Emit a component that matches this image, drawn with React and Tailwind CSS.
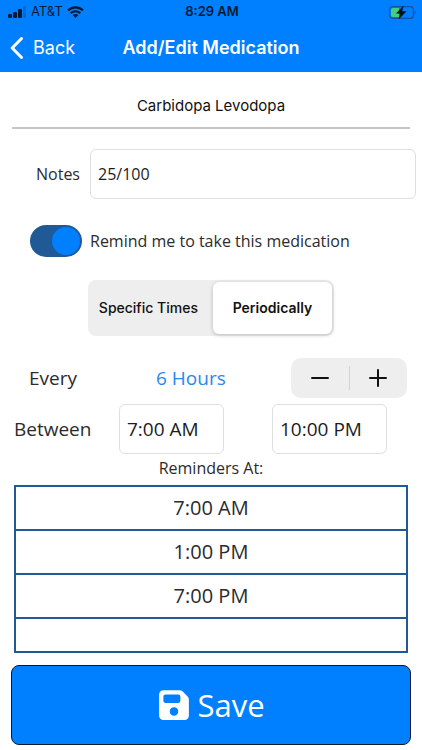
import { useState } from "react";
import { FaFloppyDisk } from "react-icons/fa6";

const field =
  "h-[50px] rounded-md border border-[#dfdfe1] bg-white px-[7px] text-[#1c1c1e] outline-none";

function SignalIcon() {
  return (
    <svg width="19" height="12" viewBox="0 0 19 12" aria-hidden="true">
      <rect x="0" y="8" width="4" height="4" rx="1" fill="#001a33" />
      <rect x="5" y="6" width="4" height="6" rx="1" fill="#001a33" />
      <rect x="10" y="3" width="4" height="9" rx="1" fill="#001a33" />
      <rect x="15" y="0" width="3" height="12" rx="1" fill="#0068cf" />
    </svg>
  );
}

function WifiIcon() {
  return (
    <svg width="17" height="12" viewBox="0 0 17 12" fill="none" aria-hidden="true">
      <path d="M1 4.4C5.2 0.3 11.8 0.3 16 4.4" stroke="#001a33" strokeWidth="2.2" />
      <path d="M3.7 7.2C6.4 4.6 10.6 4.6 13.3 7.2" stroke="#001a33" strokeWidth="2.1" />
      <path d="M8.5 12L5.7 9.1C7.2 7.6 9.8 7.6 11.3 9.1Z" fill="#001a33" />
    </svg>
  );
}

function BatteryIcon() {
  return (
    <svg width="27" height="13" viewBox="0 0 27 13" fill="none" aria-hidden="true">
      <rect x="0.6" y="0.6" width="23.8" height="11.8" rx="3.4" stroke="#0a55a8" strokeWidth="1.2" />
      <path d="M4 2h6v9H4a2 2 0 0 1-2-2V4a2 2 0 0 1 2-2Z" fill="#3fcf7f" />
      <path d="M25.6 4.3c1.3.6 1.3 3.8 0 4.4Z" fill="#0a55a8" />
      <path d="M14.2 0.2L7.6 7.3H11.4L10 12.8L16.8 5.6H12.8Z" fill="#001018" stroke="#001018" strokeWidth="0.6" />
    </svg>
  );
}

function Header() {
  return (
    <header className="bg-[#007fff] font-['Inter',sans-serif]">
      <div className="grid h-6 grid-cols-3 items-center pr-1.5 pl-2 text-[13px] text-[#001a33]">
        <div className="flex items-center gap-1">
          <SignalIcon />
          <span>AT&amp;T</span>
          <WifiIcon />
        </div>
        <span className="text-center font-semibold">8:29 AM</span>
        <div className="flex justify-end">
          <BatteryIcon />
        </div>
      </div>
      <nav className="grid h-12 grid-cols-[1fr_auto_1fr] items-center px-2.5 text-lg text-white">
        <a href="#back" className="flex items-center gap-2.5">
          <svg width="13" height="22" viewBox="0 0 13 22" fill="none" aria-hidden="true">
            <path d="M11.5 1.5L2.2 11L11.5 20.5" stroke="white" strokeWidth="3" strokeLinecap="round" strokeLinejoin="round" />
          </svg>
          Back
        </a>
        <h1 className="font-semibold">Add/Edit Medication</h1>
      </nav>
    </header>
  );
}

function ModeOption({ value, mode, onSelect, children }) {
  return (
    <label className="flex flex-auto cursor-pointer items-center justify-center rounded-md pr-3.5 pl-2 font-medium has-checked:bg-white has-checked:px-[19px] has-checked:font-semibold has-checked:shadow-[0_1px_4px_rgba(0,0,0,0.22)]">
      <input
        type="radio"
        name="mode"
        className="sr-only"
        checked={mode === value}
        onChange={() => onSelect(value)}
      />
      {children}
    </label>
  );
}

export default function App() {
  const [mode, setMode] = useState("periodic");
  const [hours, setHours] = useState(6);
  const times = ["7:00 AM", "1:00 PM", "7:00 PM"];

  return (
    <div className="bg-white font-['Open_Sans',sans-serif] text-[#2b2b2d]">
      <Header />
      <main className="pt-4">
        <div className="px-3">
          <input
            aria-label="Medication name"
            defaultValue="Carbidopa Levodopa"
            className="h-[41px] w-full border-b-2 border-[#c6c6c6] pb-1 text-center font-['Inter',sans-serif] text-[15px] text-[#111111] outline-none"
          />
        </div>

        <div className="mt-5 flex items-center pr-1.5 pl-9">
          <label htmlFor="notes" className="w-[54px]">Notes</label>
          <input id="notes" defaultValue="25/100" className={`${field} min-w-0 flex-1`} />
        </div>

        <div className="mt-[26px] flex items-center gap-2 pl-[30px]">
          <input
            id="remind"
            type="checkbox"
            defaultChecked
            className="flex h-8 w-[52px] appearance-none items-center rounded-full bg-[#9a9aa0] px-0.5 before:size-7 before:rounded-full before:bg-white checked:justify-end checked:bg-[#1f5a97] checked:before:bg-[#007fff]"
          />
          <label htmlFor="remind">Remind me to take this medication</label>
        </div>

        <fieldset
          aria-label="Reminder type"
          className="mx-auto mt-[23px] flex h-14 w-[246px] rounded-lg bg-[#eeeeef] p-0.5 font-['Inter',sans-serif] text-sm text-[#111111]"
        >
          <ModeOption value="specific" mode={mode} onSelect={setMode}>Specific Times</ModeOption>
          <ModeOption value="periodic" mode={mode} onSelect={setMode}>Periodically</ModeOption>
        </fieldset>

        <div className="mt-[22px] grid h-10 grid-cols-[127px_1fr_116px] items-center pr-[15px] pl-[29px] text-[19px]">
          <span>Every</span>
          <output className="text-[#2b86f0]">{hours} Hours</output>
          <div className="flex h-10 items-center rounded-[10px] bg-[#eeeeef]">
            <button
              type="button"
              aria-label="Fewer hours"
              className="flex h-full flex-1 items-center justify-center"
              onClick={() => setHours(Math.max(1, hours - 1))}
            >
              <svg width="18" height="18" viewBox="0 0 18 18" aria-hidden="true">
                <path d="M1 9H17" stroke="#111111" strokeWidth="2" strokeLinecap="round" />
              </svg>
            </button>
            <span className="h-6 w-px bg-[#d4d4d7]" />
            <button
              type="button"
              aria-label="More hours"
              className="flex h-full flex-1 items-center justify-center"
              onClick={() => setHours(hours + 1)}
            >
              <svg width="18" height="18" viewBox="0 0 18 18" aria-hidden="true">
                <path d="M1 9H17M9 1V17" stroke="#111111" strokeWidth="2" strokeLinecap="round" />
              </svg>
            </button>
          </div>
        </div>

        <div className="mt-1.5 grid grid-cols-[105px_1fr_115px] items-center pr-[35px] pl-3.5 text-[19px]">
          <span>Between</span>
          <input aria-label="Start time" defaultValue="7:00 AM" className={`${field} w-[105px]`} />
          <input aria-label="End time" defaultValue="10:00 PM" className={`${field} w-[115px]`} />
        </div>

        <h2 className="mt-0.5 text-center text-base">Reminders At:</h2>

        <div className="mt-[5px] px-3.5">
          <table aria-label="Reminder times" className="w-full border-collapse text-center text-xl">
            <tbody>
              {times.map((time) => (
                <tr key={time}>
                  <td className="h-11 border-2 border-[#1f5a97]">{time}</td>
                </tr>
              ))}
              <tr>
                <td className="h-[34px] border-2 border-[#1f5a97]" />
              </tr>
            </tbody>
          </table>
        </div>

        <div className="px-[11px] pt-3 pb-1.5">
          <button
            type="button"
            className="flex h-20 w-full items-center justify-center gap-1.5 rounded-lg border border-[#061a33] bg-[#007fff] text-[31px] text-white"
          >
            <FaFloppyDisk size={34} aria-hidden="true" />
            Save
          </button>
        </div>
      </main>
    </div>
  );
}
